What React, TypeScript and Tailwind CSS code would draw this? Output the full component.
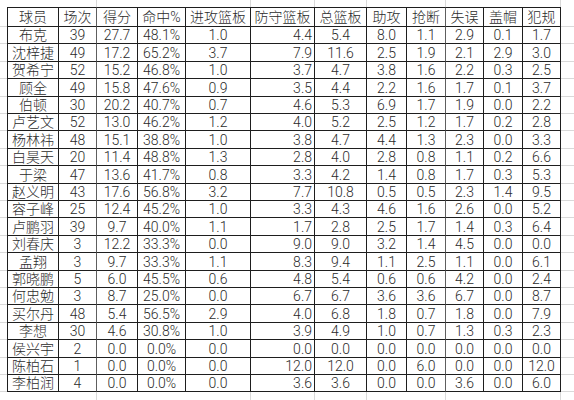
const headers = ['球员', '场次', '得分', '命中%', '进攻篮板', '防守篮板', '总篮板', '助攻', '抢断', '失误', '盖帽', '犯规'];

const rows: string[][] = [
  ['布克', '39', '27.7', '48.1%', '1.0', '4.4', '5.4', '8.0', '1.1', '2.9', '0.1', '1.7'],
  ['沈梓捷', '49', '17.2', '65.2%', '3.7', '7.9', '11.6', '2.5', '1.9', '2.1', '2.9', '3.0'],
  ['贺希宁', '52', '15.2', '46.8%', '1.0', '3.7', '4.7', '3.8', '1.6', '2.2', '0.3', '2.5'],
  ['顾全', '49', '15.8', '47.6%', '0.9', '3.5', '4.4', '2.2', '1.6', '1.7', '0.1', '3.7'],
  ['伯顿', '30', '20.2', '40.7%', '0.7', '4.6', '5.3', '6.9', '1.7', '1.9', '0.0', '2.2'],
  ['卢艺文', '52', '13.0', '46.2%', '1.2', '4.0', '5.2', '2.5', '1.2', '1.7', '0.2', '2.8'],
  ['杨林祎', '48', '15.1', '38.8%', '1.0', '3.8', '4.7', '4.4', '1.3', '2.3', '0.0', '3.3'],
  ['白昊天', '20', '11.4', '48.8%', '1.3', '2.8', '4.0', '2.8', '0.8', '1.1', '0.2', '6.6'],
  ['于梁', '47', '13.6', '41.7%', '0.8', '3.3', '4.2', '1.4', '0.8', '1.7', '0.3', '5.3'],
  ['赵义明', '43', '17.6', '56.8%', '3.2', '7.7', '10.8', '0.5', '0.5', '2.3', '1.4', '9.5'],
  ['容子峰', '25', '12.4', '45.2%', '1.0', '3.3', '4.3', '4.6', '1.6', '2.6', '0.0', '5.2'],
  ['卢鹏羽', '39', '9.7', '40.0%', '1.1', '1.7', '2.8', '2.5', '1.7', '1.4', '0.3', '6.4'],
  ['刘春庆', '3', '12.2', '33.3%', '0.0', '9.0', '9.0', '3.2', '1.4', '4.5', '0.0', '0.0'],
  ['孟翔', '3', '9.7', '33.3%', '1.1', '8.3', '9.4', '1.1', '2.5', '1.1', '0.0', '6.1'],
  ['郭晓鹏', '5', '6.0', '45.5%', '0.6', '4.8', '5.4', '0.6', '0.6', '4.2', '0.0', '2.4'],
  ['何忠勉', '3', '8.7', '25.0%', '0.0', '6.7', '6.7', '3.6', '3.6', '6.7', '0.0', '8.7'],
  ['买尔丹', '48', '5.4', '56.5%', '2.9', '4.0', '6.8', '1.8', '0.7', '1.8', '0.0', '7.9'],
  ['李想', '30', '4.6', '30.8%', '1.0', '3.9', '4.9', '1.0', '0.7', '1.3', '0.3', '2.3'],
  ['侯兴宇', '2', '0.0', '0.0%', '0.0', '0.0', '0.0', '0.0', '0.0', '0.0', '0.0', '0.0'],
  ['陈柏石', '1', '0.0', '0.0%', '0.0', '12.0', '12.0', '0.0', '6.0', '0.0', '0.0', '12.0'],
  ['李柏润', '4', '0.0', '0.0%', '0.0', '3.6', '3.6', '0.0', '0.0', '3.6', '0.0', '6.0'],
];

// columns whose sheet gridline shows above / below the table
const gridCols = [false, true, false, false, true, true, true, false, true, false, false, true];

const cols = 'grid grid-cols-[7px_52px_38px_41px_48px_65px_64px_52px_40px_39px_38px_39px_38px_13px]';

// rows are ~17.4px apart in the sheet, round each one to whole pixels
const PITCH = 17.4;
const rowHeight = (i: number) => Math.round((i + 1) * PITCH) - Math.round(i * PITCH);

function Cell({ text, col, top }: { text: string; col: number; top?: boolean }) {
  const align = col === 5 && !top ? 'justify-end pr-[2px]' : 'justify-center';
  const thick = col === 1 || col === 8 ? 'border-r-[#5e5e5e]' : '';
  return (
    <div
      className={`flex items-center ${align} border-r border-b border-[#1e1e1e] ${thick} ${col === 0 ? 'border-l' : ''} ${top ? 'border-t' : ''}`}
    >
      <span className="block leading-[15px] pt-[1px] whitespace-nowrap">{text}</span>
    </div>
  );
}

function Strip({ height }: { height: string }) {
  return (
    <div className={`${cols} ${height}`}>
      <div />
      {gridCols.map((g, i) => (
        <div key={i} className={g ? 'border-r border-[#d9d9d9]' : ''} />
      ))}
      <div />
    </div>
  );
}

export default function App() {
  return (
    <div
      className="w-[574px] h-[400px] overflow-hidden bg-white text-[#2b2b2b] text-[14px] font-light"
      style={{ fontFamily: 'Roboto, "Noto Sans CJK SC", sans-serif' }}
    >
      <Strip height="h-[7px]" />
      <div className={`${cols} h-[20px]`}>
        <div className="border-b border-[#d9d9d9]" />
        {headers.map((h, i) => (
          <Cell key={i} text={h} col={i} top />
        ))}
        <div className="border-b border-[#d9d9d9]" />
      </div>
      {rows.map((r, ri) => (
        <div key={ri} className={cols} style={{ height: rowHeight(ri) }}>
          <div className="border-b border-[#d9d9d9]" />
          {r.map((v, i) => (
            <Cell key={i} text={v} col={i} />
          ))}
          <div className="border-b border-[#d9d9d9]" />
        </div>
      ))}
      <Strip height="h-[20px]" />
    </div>
  );
}
